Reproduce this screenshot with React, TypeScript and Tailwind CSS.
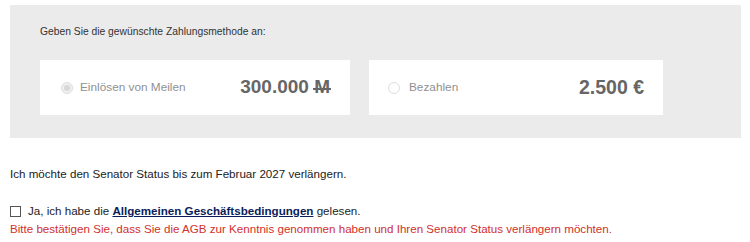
export default function App() {
  return (
    <div className="bg-white px-[10px] pt-[5px] text-[#333]" style={{ fontFamily: '"Liberation Sans", Arial, sans-serif' }}>
      <div className="h-[133px] w-[731px] bg-[#ebebeb] px-[30px] pt-[20px]">
        <p className="text-[10.3px] leading-[14px] text-[#333]">Geben Sie die gewünschte Zahlungsmethode an:</p>
        <div className="mt-[21px] flex gap-[19px]">
          <div className="flex h-[55px] w-[310px] items-center bg-white pl-[21px] pr-[20px]">
            <span className="flex h-[12px] w-[12px] items-center justify-center rounded-full border border-[#dedede] bg-[#efefef]">
              <span className="h-[6px] w-[6px] rounded-full bg-[#d8d8d8]" />
            </span>
            <span className="ml-[7px] text-[11.8px] text-[#909090]">Einlösen von Meilen</span>
            <span className="ml-auto text-[19px] font-bold text-[#666]">
              300.000{" "}
              <span className="relative inline-block">
                M
                <span className="absolute left-[-1px] right-[-1px] top-[52%] h-[1.5px] bg-[#666]" />
              </span>
            </span>
          </div>
          <div className="flex h-[55px] w-[294px] items-center bg-white pl-[19px] pr-[19px]">
            <span className="h-[12px] w-[12px] rounded-full border border-[#dedede] bg-white" />
            <span className="ml-[9px] text-[11.8px] text-[#909090]">Bezahlen</span>
            <span className="ml-auto text-[19.5px] font-bold text-[#666]">2.500 €</span>
          </div>
        </div>
      </div>
      <p className="mt-[28px] text-[11.6px] leading-[16px] text-[#222]">
        Ich möchte den Senator Status bis zum Februar 2027 verlängern.
      </p>
      <label className="mt-[20px] flex items-center text-[11.6px] leading-[18px] text-[#222]">
        <span className="h-[11px] w-[11px] border border-[#555] bg-white" />
        <span className="ml-[7px]">
          Ja, ich habe die{" "}
          <a className="font-bold text-[#0b1c5a] underline">Allgemeinen Geschäftsbedingungen</a> gelesen.
        </span>
      </label>
      <p className="text-[11.6px] leading-[18px] text-[#d1302c]">
        Bitte bestätigen Sie, dass Sie die AGB zur Kenntnis genommen haben und Ihren Senator Status verlängern möchten.
      </p>
    </div>
  );
}
